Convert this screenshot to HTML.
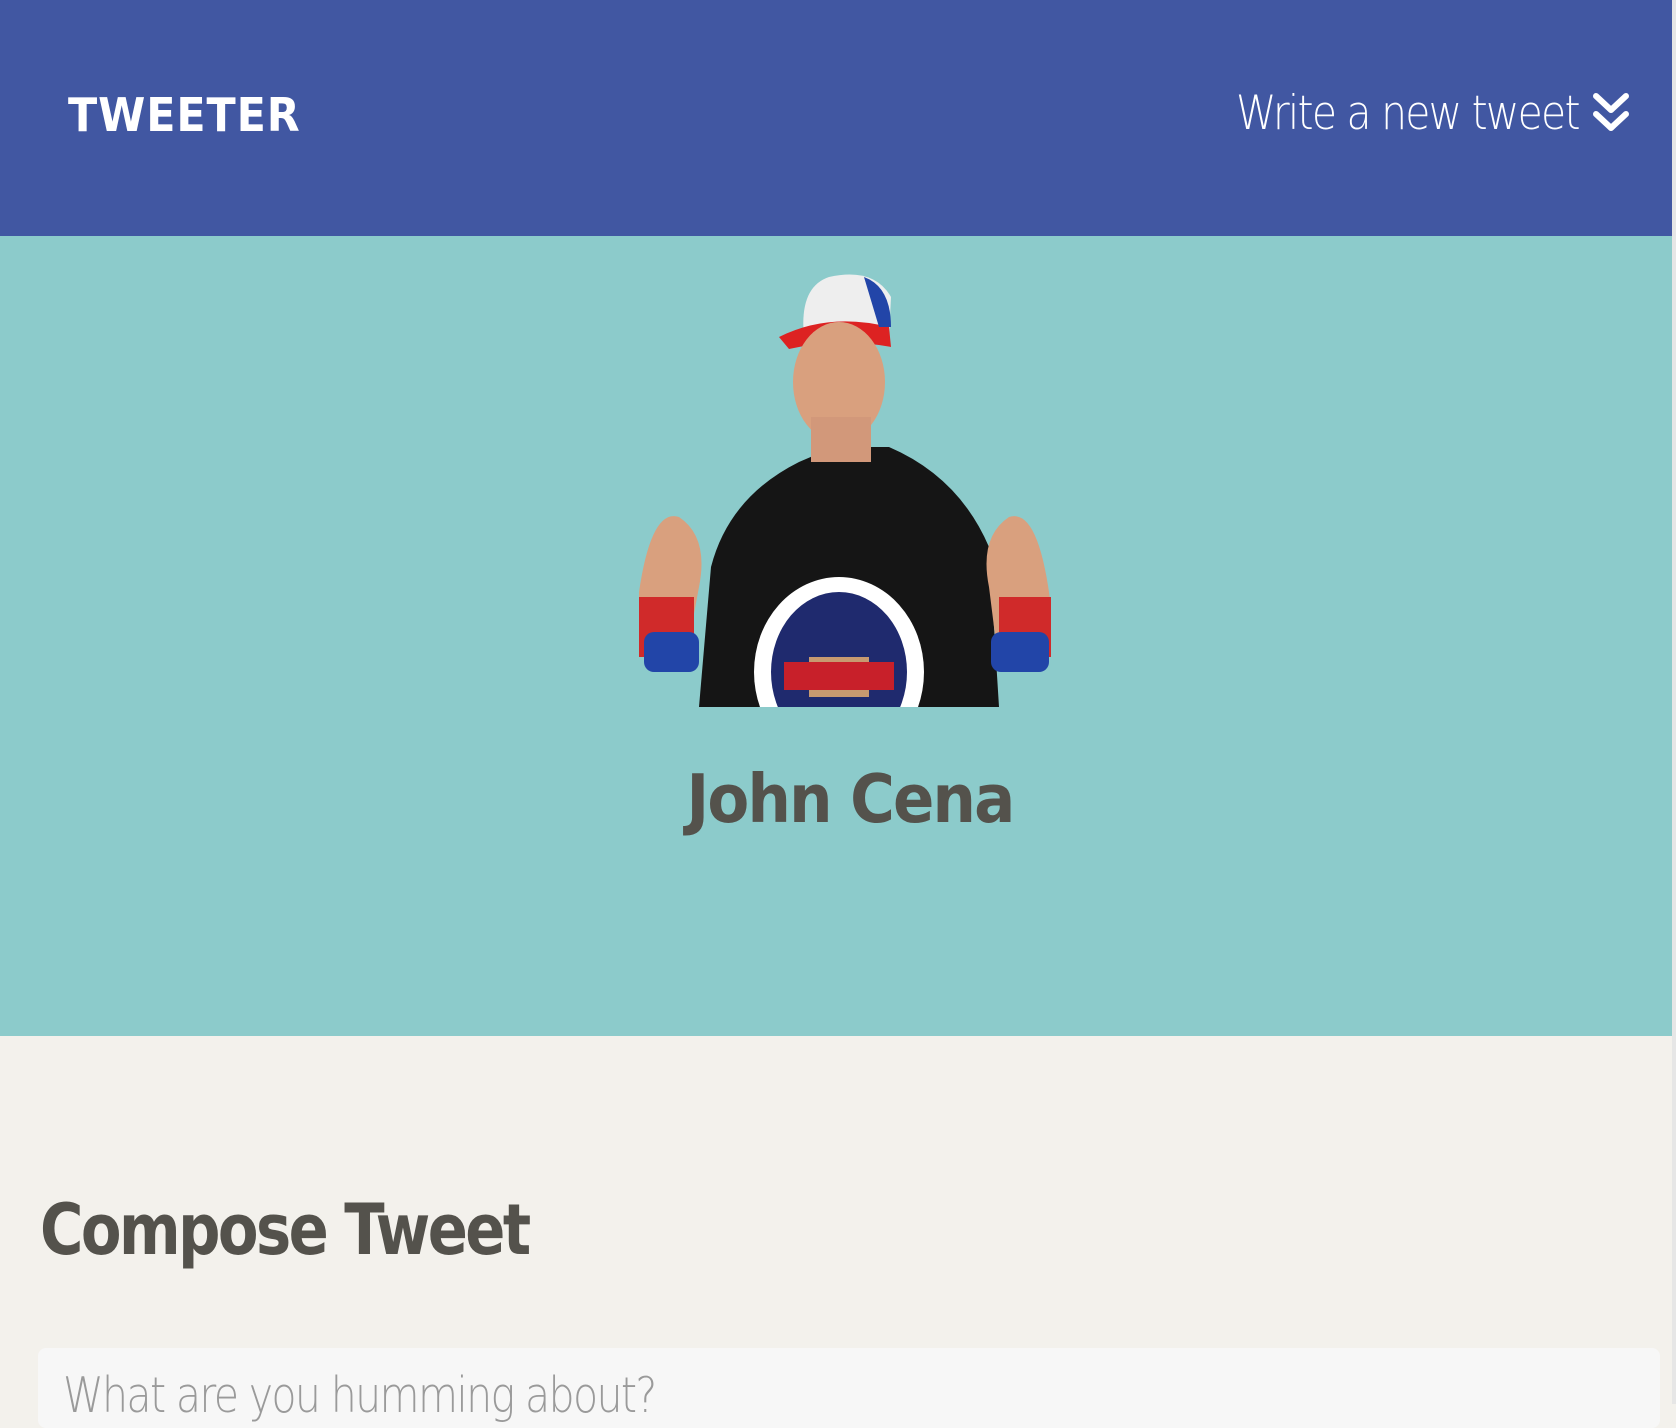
<!DOCTYPE html>
<html><head><meta charset="utf-8"><style>
*{margin:0;padding:0;box-sizing:border-box}
body{width:1676px;height:1404px;overflow:hidden;background:#f3f1ec;font-family:"Liberation Sans",sans-serif;position:relative}
.hdr{position:absolute;left:0;top:0;width:1672px;height:236px;background:#4157a2}
.logo{position:absolute;left:68px;top:88px;color:#fff;font:900 46px "DejaVu Sans",sans-serif;letter-spacing:1px;transform:scaleX(0.93);transform-origin:left}
.wr{position:absolute;left:1236px;top:86px;color:#fff;font:300 47px "DejaVu Sans",sans-serif;letter-spacing:-2px;white-space:nowrap;transform:scaleX(0.87);transform-origin:left}
.hero{position:absolute;left:0;top:236px;width:1672px;height:800px;background:#8ccbcb}
.name{position:absolute;left:14px;width:1672px;top:760px;text-align:center;color:#54524c;font:bold 67px "DejaVu Sans",sans-serif;letter-spacing:-2px;transform:scaleX(.91)}
.sb{position:absolute;left:1672px;top:0;width:4px;height:1404px;background:#e6e6e6}
h2{position:absolute;left:40px;top:1189px;color:#54524c;font:bold 70px "DejaVu Sans",sans-serif;letter-spacing:-3px;transform:scaleX(.845);transform-origin:left}
.ta{position:absolute;left:38px;top:1348px;width:1622px;height:80px;background:#f7f7f7;border-radius:8px}
.ph{position:absolute;left:63px;top:1367px;color:#9a9a9a;font:300 49px "DejaVu Sans",sans-serif;letter-spacing:-2px;transform:scaleX(.84);transform-origin:left;white-space:nowrap}
</style></head><body>
<div class="hdr">
<div class="logo">TWEETER</div>
<div class="wr">Write a new tweet</div>
<svg style="position:absolute;left:1592px;top:92px" width="38" height="42" viewBox="0 0 38 42"><path d="M4 4 L19 18 L34 4 M4 22 L19 36 L34 22" stroke="#fff" stroke-width="6" fill="none" stroke-linecap="round" stroke-linejoin="round"/></svg>
</div>
<div class="hero"></div>
<svg style="position:absolute;left:639px;top:267px" width="412" height="440" viewBox="0 0 412 440">
<path d="M60 440 L72 300 Q90 230 160 195 L195 180 L250 180 Q320 210 350 280 L360 440Z" fill="#151515"/>
<ellipse cx="200" cy="405" rx="85" ry="95" fill="#fff"/>
<ellipse cx="200" cy="405" rx="68" ry="80" fill="#1f2a6e"/>
<rect x="170" y="390" width="60" height="40" fill="#c79a70"/>
<rect x="145" y="395" width="110" height="28" fill="#c8202a"/>
<path d="M165 70 Q160 20 190 10 Q235 0 252 30 L250 70Z" fill="#eee"/>
<path d="M140 70 Q190 45 250 60 L252 80 Q200 70 150 82Z" fill="#d22"/>
<path d="M225 10 Q252 20 252 60 L240 60Z" fill="#2245a8"/>
<ellipse cx="200" cy="115" rx="46" ry="60" fill="#d9a07e"/>
<rect x="172" y="150" width="60" height="45" fill="#d2987a"/>
<path d="M-2 340 Q10 240 40 250 Q70 270 60 320 L45 400 L10 400Z" fill="#d9a07e"/>
<path d="M412 340 Q400 240 370 250 Q340 270 350 320 L360 400 L400 400Z" fill="#d9a07e"/>
<rect x="0" y="330" width="55" height="60" fill="#d02a2a"/>
<rect x="360" y="330" width="52" height="60" fill="#d02a2a"/>
<rect x="5" y="365" width="55" height="40" rx="10" fill="#2245a8"/>
<rect x="352" y="365" width="58" height="40" rx="10" fill="#2245a8"/>
</svg>
<div class="name">John Cena</div>
<h2>Compose Tweet</h2>
<div class="ta"></div>
<div class="ph">What are you humming about?</div>
<div class="sb"></div>
</body></html>
